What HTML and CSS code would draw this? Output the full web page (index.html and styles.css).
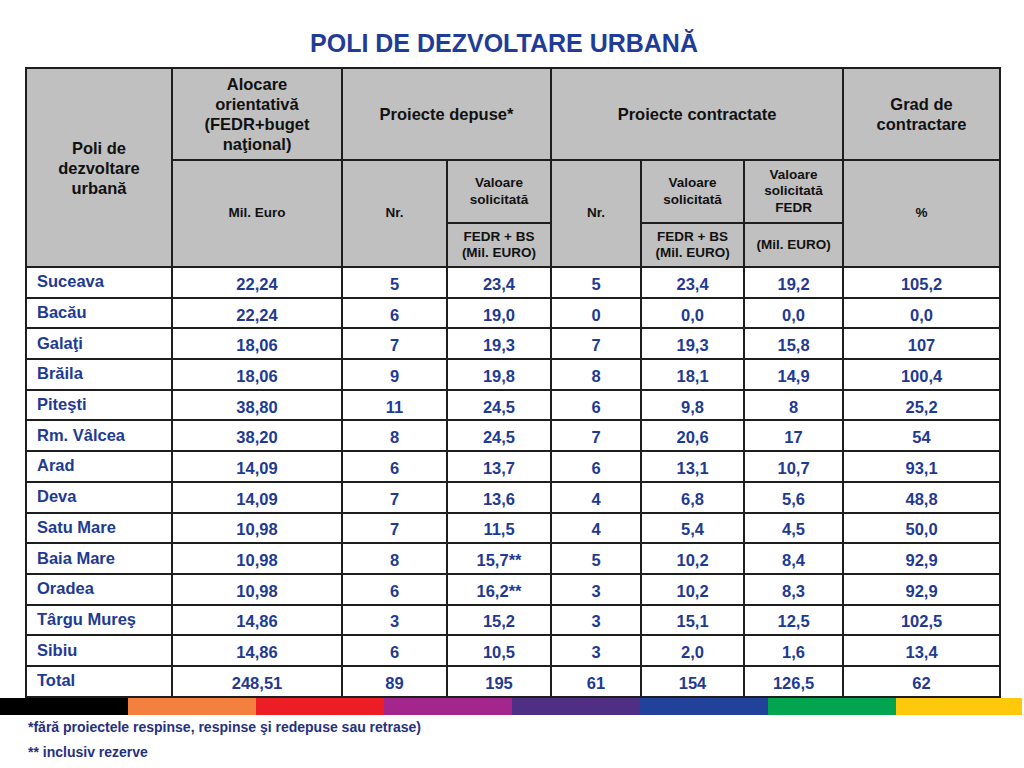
FILE: index.html
```html
<!DOCTYPE html>
<html lang="ro">
<head>
<meta charset="utf-8">
<title>Poli de dezvoltare urbană</title>
<link rel="stylesheet" href="styles.css">
</head>
<body>
<h1 class="title">POLI DE DEZVOLTARE URBANĂ</h1>
<table class="grid">
  <colgroup>
    <col class="c1"><col class="c2"><col class="c3"><col class="c4"><col class="c5"><col class="c6"><col class="c7"><col class="c8">
  </colgroup>
  <thead>
    <tr class="h1">
      <th rowspan="3" class="big">Poli de<br>dezvoltare<br>urbană</th>
      <th class="big">Alocare<br>orientativă<br>(FEDR+buget<br>naţional)</th>
      <th colspan="2" class="big">Proiecte depuse*</th>
      <th colspan="3" class="big">Proiecte contractate</th>
      <th class="big">Grad de<br>contractare</th>
    </tr>
    <tr class="h2">
      <th rowspan="2" class="sm">Mil. Euro</th>
      <th rowspan="2" class="sm">Nr.</th>
      <th class="sm">Valoare<br>solicitată</th>
      <th rowspan="2" class="sm">Nr.</th>
      <th class="sm">Valoare<br>solicitată</th>
      <th class="sm">Valoare<br>solicitată<br>FEDR</th>
      <th rowspan="2" class="sm">%</th>
    </tr>
    <tr class="h3">
      <th class="sm">FEDR + BS<br>(Mil. EURO)</th>
      <th class="sm">FEDR + BS<br>(Mil. EURO)</th>
      <th class="sm">(Mil. EURO)</th>
    </tr>
  </thead>
  <tbody>
    <tr><td class="name">Suceava</td><td>22,24</td><td>5</td><td>23,4</td><td>5</td><td>23,4</td><td>19,2</td><td>105,2</td></tr>
    <tr><td class="name">Bacău</td><td>22,24</td><td>6</td><td>19,0</td><td>0</td><td>0,0</td><td>0,0</td><td>0,0</td></tr>
    <tr><td class="name">Galaţi</td><td>18,06</td><td>7</td><td>19,3</td><td>7</td><td>19,3</td><td>15,8</td><td>107</td></tr>
    <tr><td class="name">Brăila</td><td>18,06</td><td>9</td><td>19,8</td><td>8</td><td>18,1</td><td>14,9</td><td>100,4</td></tr>
    <tr><td class="name">Piteşti</td><td>38,80</td><td>11</td><td>24,5</td><td>6</td><td>9,8</td><td>8</td><td>25,2</td></tr>
    <tr><td class="name">Rm. Vâlcea</td><td>38,20</td><td>8</td><td>24,5</td><td>7</td><td>20,6</td><td>17</td><td>54</td></tr>
    <tr><td class="name">Arad</td><td>14,09</td><td>6</td><td>13,7</td><td>6</td><td>13,1</td><td>10,7</td><td>93,1</td></tr>
    <tr><td class="name">Deva</td><td>14,09</td><td>7</td><td>13,6</td><td>4</td><td>6,8</td><td>5,6</td><td>48,8</td></tr>
    <tr><td class="name">Satu Mare</td><td>10,98</td><td>7</td><td>11,5</td><td>4</td><td>5,4</td><td>4,5</td><td>50,0</td></tr>
    <tr><td class="name">Baia Mare</td><td>10,98</td><td>8</td><td>15,7**</td><td>5</td><td>10,2</td><td>8,4</td><td>92,9</td></tr>
    <tr><td class="name">Oradea</td><td>10,98</td><td>6</td><td>16,2**</td><td>3</td><td>10,2</td><td>8,3</td><td>92,9</td></tr>
    <tr><td class="name">Târgu Mureş</td><td>14,86</td><td>3</td><td>15,2</td><td>3</td><td>15,1</td><td>12,5</td><td>102,5</td></tr>
    <tr><td class="name">Sibiu</td><td>14,86</td><td>6</td><td>10,5</td><td>3</td><td>2,0</td><td>1,6</td><td>13,4</td></tr>
    <tr><td class="name">Total</td><td>248,51</td><td>89</td><td>195</td><td>61</td><td>154</td><td>126,5</td><td>62</td></tr>
  </tbody>
</table>
<div class="stripe">
  <span class="s black"></span><span class="s orange"></span><span class="s red"></span><span class="s magenta"></span><span class="s purple"></span><span class="s blue"></span><span class="s green"></span><span class="s yellow"></span>
</div>
<p class="note">*fără proiectele respinse, respinse şi redepuse sau retrase)</p>
<p class="note">** inclusiv rezerve</p>
</body>
</html>
```

FILE: styles.css
```css
html, body {
  margin: 0;
  padding: 0;
  background: #ffffff;
}
body {
  width: 1024px;
  height: 768px;
  overflow: hidden;
  font-family: "Liberation Sans", Arial, sans-serif;
}
.title {
  margin: 0 0 10px 0;
  padding: 29px 16px 0 0;
  text-align: center;
  font-size: 25px;
  line-height: 28px;
  font-weight: bold;
  color: #1f3c98;
}
.grid {
  margin-left: 25px;
  border-collapse: collapse;
  table-layout: fixed;
  width: 974px;
  border: 2px solid #1e1e1e;
}
.c1 { width: 146px; }
.c2 { width: 170px; }
.c3 { width: 105px; }
.c4 { width: 104px; }
.c5 { width: 90px; }
.c6 { width: 103px; }
.c7 { width: 99px; }
.c8 { width: 157px; }
.grid th, .grid td {
  border: 2px solid #1e1e1e;
  padding: 0;
  text-align: center;
  font-weight: bold;
}
.grid th {
  background: #c0c0c0;
  color: #111111;
}
.h1 { height: 92px; }
.h2 { height: 63px; }
.h3 { height: 44px; }
.big {
  font-size: 16.5px;
  line-height: 20px;
}
.sm {
  font-size: 13.5px;
  line-height: 16.5px;
}
.grid tbody tr { height: 30.7px; }
.grid td {
  font-size: 16.5px;
  line-height: 18px;
  color: #1f3a93;
  vertical-align: middle;
  padding-top: 3px;
}
.grid td.name {
  text-align: left;
  padding: 0 0 2px 10px;
}
.stripe {
  display: flex;
  width: 1022px;
  height: 17px;
}
.s { flex: 0 0 128px; }
.s.yellow { flex: 0 0 126px; }
.black { background: #000000; }
.orange { background: #f4803f; }
.red { background: #ec1d24; }
.magenta { background: #a2268c; }
.purple { background: #4e2f83; }
.blue { background: #22419a; }
.green { background: #00a550; }
.yellow { background: #fdc90a; }
.note {
  margin: 0;
  padding-left: 28px;
  font-size: 14px;
  line-height: 25px;
  font-weight: bold;
  color: #25307f;
}
```
